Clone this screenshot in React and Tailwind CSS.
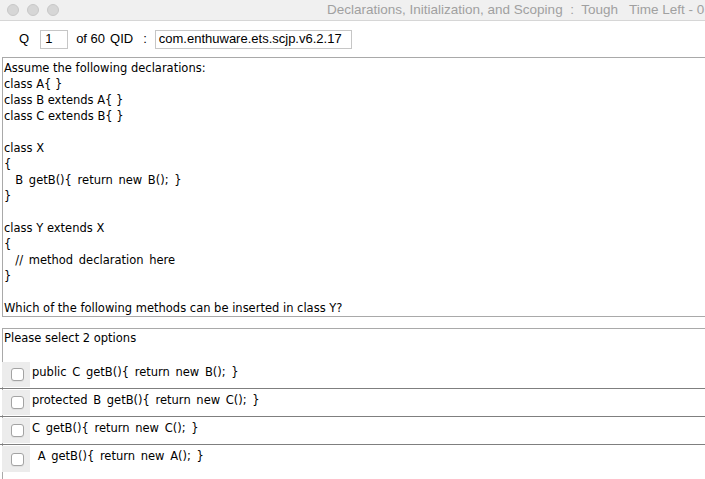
import React from "react";

const body = { fontFamily: '"DejaVu Sans", Verdana, sans-serif' };
const ui = { fontFamily: '"Liberation Sans", Arial, sans-serif' };

const lines = [
  ["Assume the following declarations:", 0],
  ["class A{ }", 0],
  ["class B extends A{ }", 0],
  ["class C extends B{ }", 0],
  ["", 0],
  ["class X", 0],
  ["{", 0],
  ["  B getB(){ return new B(); }", 1],
  ["}", 0],
  ["", 0],
  ["class Y extends X", 0],
  ["{", 0],
  ["  // method declaration here", 1],
  ["}", 0],
  ["", 0],
  ["Which of the following methods can be inserted in class Y?", 0],
];

const options = [
  "public C getB(){ return new B(); }",
  "protected B getB(){ return new C(); }",
  "C getB(){ return new C(); }",
  " A getB(){ return new A(); }",
];

function Option({ text, last }) {
  return (
    <div className={`flex h-[28px] ${last ? "" : "border-b border-[#7f7f7f]"}`}>
      <div className="ml-[2px] w-[28px] flex items-center justify-center bg-[#ececec] mt-[1px] mb-[1px]">
        <div className="w-[13px] h-[13px] rounded-[3px] border border-[#a3a3a3] bg-white shadow-[0_1px_0_rgba(0,0,0,0.05)] ml-[2px]" />
      </div>
      <div
        className="flex items-center pl-[2px] pb-[4px] text-[11.5px] text-black whitespace-pre [word-spacing:2px]"
        style={body}
      >
        {text}
      </div>
    </div>
  );
}

export default function App() {
  return (
    <div className="w-[705px] h-[479px] overflow-hidden bg-white flex flex-col">
      {/* Title bar */}
      <div className="h-[21px] shrink-0 flex items-center bg-[#f0f0f0] border-b border-[#d6d6d6] overflow-hidden">
        <div className="flex gap-[8px] pl-[7px] shrink-0">
          <div className="w-[12px] h-[12px] rounded-full bg-[#d6d6d6] border border-[#c8c8c8]" />
          <div className="w-[12px] h-[12px] rounded-full bg-[#d6d6d6] border border-[#c8c8c8]" />
          <div className="w-[12px] h-[12px] rounded-full bg-[#d6d6d6] border border-[#c8c8c8]" />
        </div>
        <div className="ml-[268px] text-[13.5px] text-[#a0a0a0] whitespace-pre shrink-0" style={ui}>
          {"Declarations, Initialization, and Scoping  :  Tough   Time Left - 0"}
        </div>
      </div>

      {/* Toolbar */}
      <div className="h-[36px] shrink-0 flex items-center text-[13px] text-black" style={ui}>
        <span className="ml-[19px]">Q</span>
        <div className="ml-[11px] w-[28px] h-[19px] border border-[#c6c6c6] flex items-center pl-[4px]">1</div>
        <span className="ml-[8px] whitespace-pre">of 60</span>
        <span className="ml-[5px]">QID</span>
        <span className="ml-[10px]">:</span>
        <div className="ml-[8px] w-[197px] h-[19px] border border-[#c6c6c6] flex items-center pl-[3px]">
          com.enthuware.ets.scjp.v6.2.17
        </div>
      </div>

      {/* Question */}
      <div className="ml-[2px] shrink-0 border border-r-0 border-[#a9a9a9] pt-[2px] pl-[1px]" style={body}>
        {lines.map(([l, code], i) => (
          <div
            key={i}
            className={`h-[16px] leading-[16px] text-[11.5px] text-black whitespace-pre ${code ? "[word-spacing:2px]" : ""}`}
          >
            {l}
          </div>
        ))}
      </div>

      {/* Options */}
      <div className="mt-[11px] ml-[2px] flex-1 border-l border-t border-[#a9a9a9]">
        <div className="h-[16px] leading-[16px] mt-[1px] pl-[1px] text-[11.5px] text-black" style={body}>
          Please select 2 options
        </div>
        <div className="mt-[15px] -ml-[3px]">
          {options.map((o, i) => (
            <Option key={i} text={o} last={i === options.length - 1} />
          ))}
        </div>
      </div>
    </div>
  );
}
